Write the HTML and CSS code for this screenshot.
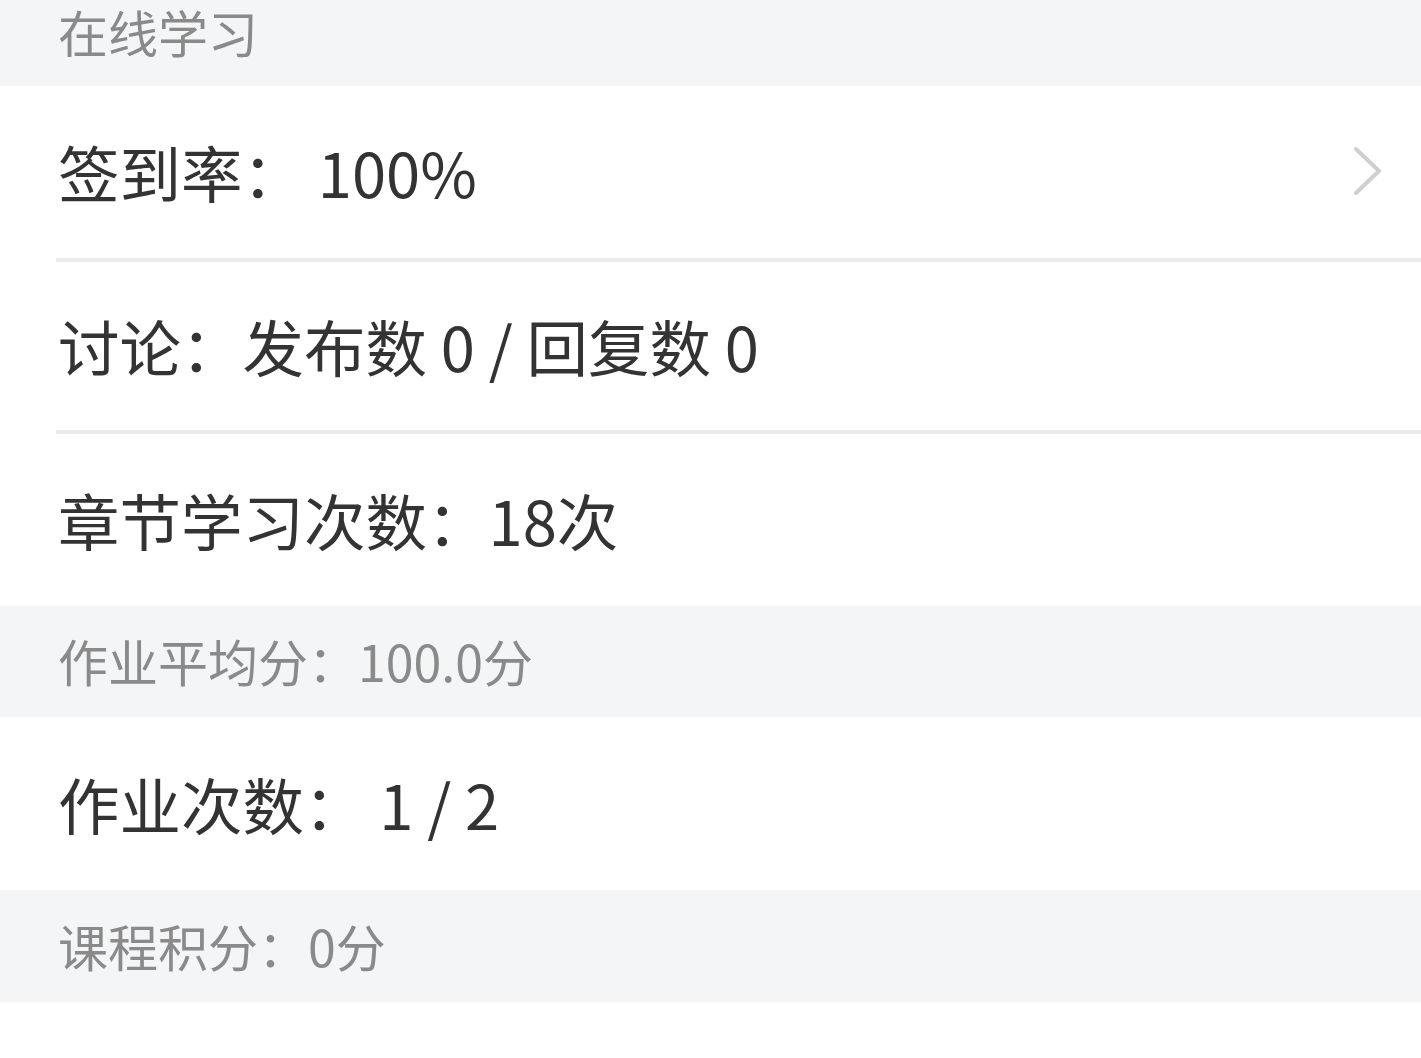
FILE: index.html
```html
<!DOCTYPE html>
<html lang="zh-CN">
<head>
<meta charset="utf-8">
<title>在线学习</title>
<link rel="stylesheet" href="styles.css">
</head>
<body>
<div class="page">
  <div class="section-head section-head--top">在线学习</div>
  <div class="group">
    <div class="row row--first row--bordered">
      <span class="row-text">签到率： 100%</span>
      <svg class="chevron" width="30" height="50" viewBox="0 0 30 50" aria-hidden="true">
        <polyline points="3,3 26,25 3,47" fill="none" stroke="#cfcfcf" stroke-width="4" stroke-linecap="round" stroke-linejoin="round"/>
      </svg>
    </div>
    <div class="row row--mid row--bordered">
      <span class="row-text">讨论：发布数 0 / 回复数 0</span>
    </div>
    <div class="row row--last">
      <span class="row-text">章节学习次数：18次</span>
    </div>
  </div>
  <div class="section-head">作业平均分：100.0分</div>
  <div class="group">
    <div class="row row--single">
      <span class="row-text">作业次数： 1 / 2</span>
    </div>
  </div>
  <div class="section-head section-head--last">课程积分：0分</div>
  <div class="group group--tail"></div>
</div>
</body>
</html>
```

FILE: styles.css
```css
html, body {
  margin: 0;
  padding: 0;
  background: #ffffff;
}

body {
  font-family: "Noto Sans CJK SC", "Noto Sans", sans-serif;
  color: #333333;
  width: 1421px;
  height: 1058px;
  overflow: hidden;
}

.page {
  display: flex;
  flex-direction: column;
}

.section-head {
  background: #f4f5f7;
  color: #8a8a8a;
  font-size: 50px;
  height: 111px;
  line-height: 108px;
  padding-left: 58px;
  white-space: pre;
}

.section-head--top {
  height: 86px;
  line-height: 62px;
}

.section-head--last {
  height: 112px;
  line-height: 110px;
}

.group {
  background: #ffffff;
}

.group--tail {
  height: 56px;
}

.row {
  margin-left: 56px;
  display: flex;
  align-items: center;
  font-size: 61.5px;
  color: #333333;
  white-space: pre;
}

.row-text {
  padding-left: 2px;
  flex: 1;
  line-height: 1;
}

.row--bordered {
  border-bottom: 4px solid #ebebeb;
}

.row--first {
  height: 172px;
  padding-top: 0;
  box-sizing: content-box;
}

.row--mid {
  height: 168px;
}

.row--last {
  height: 172px;
  padding-top: 0;
  box-sizing: border-box;
}

.row--single {
  height: 173px;
  padding-top: 0;
  box-sizing: border-box;
}

.chevron {
  margin-right: 38px;
  margin-top: -2px;
}
```
